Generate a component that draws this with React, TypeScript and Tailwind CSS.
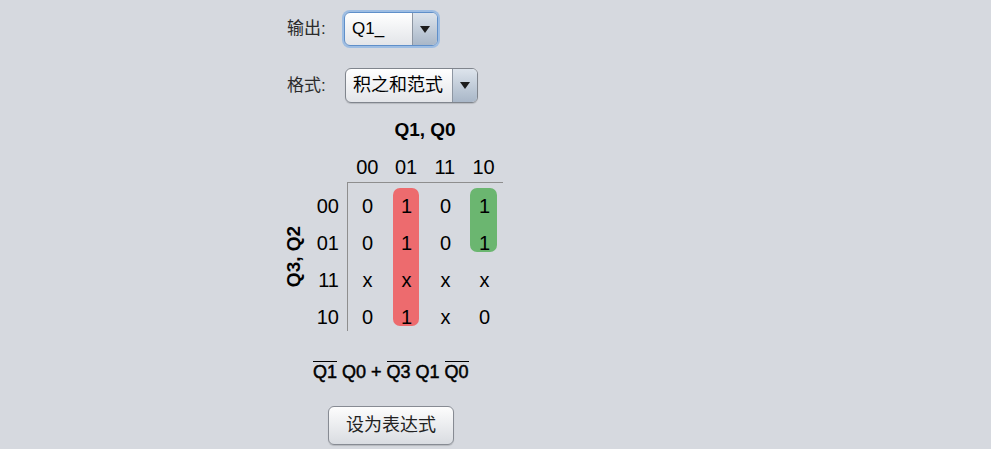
import clsx from "clsx";

const CJK = "font-['Liberation_Sans','Noto_Sans_CJK_SC',sans-serif]";

function Arrow() {
  return (
    <svg width="10" height="7" viewBox="0 0 10 7" className="block">
      <polygon points="0,0 10,0 5,7" fill="#1c1c1c" />
    </svg>
  );
}

function Combo({ value, className, focused, cjk }: { value: string; className: string; focused?: boolean; cjk?: boolean }) {
  return (
    <div
      className={clsx(
        "flex rounded-[6px] border overflow-hidden bg-linear-to-b from-[#ffffff] to-[#e3e5e9]",
        focused ? "border-[#5f8fc9] ring-2 ring-[#9dbde3]" : "border-[#80858d] shadow-[0_1px_1px_rgba(0,0,0,0.15)]",
        className
      )}
    >
      <div className={clsx("flex-1 flex items-center pl-[7px] text-black", cjk ? "text-[18px] text-[#222]" : "text-[17px]")}>{value}</div>
      <div className="w-[25px] flex items-center justify-center border-l border-[#8d96a2] bg-linear-to-b from-[#dde4ec] to-[#a9b7c8]">
        <Arrow />
      </div>
    </div>
  );
}

function Bar({ children }: { children: string }) {
  return <span className="inline-block border-t border-black leading-[21px]">{children}</span>;
}

const cols = ["00", "01", "11", "10"];
const cells = [
  ["0", "1", "0", "1"],
  ["0", "1", "0", "1"],
  ["x", "x", "x", "x"],
  ["0", "1", "x", "0"],
];

export default function App() {
  return (
    <div className={clsx("w-full h-[449px] bg-[#d6d9df] overflow-hidden", CJK)}>
      <div className="pl-[280px] pt-[12px] flex flex-col">
        {/* output select */}
        <div className="flex items-center pl-[7px]">
          <span className="w-[57px] text-[17px] text-[#2b2b2b]">输出:</span>
          <Combo value="Q1_" className="w-[94px] h-[34px]" focused />
        </div>
        <div className="flex items-center pl-[7px] mt-[22px]">
          <span className="w-[58px] text-[17px] text-[#2b2b2b]">格式:</span>
          <Combo value="积之和范式" className="w-[133px] h-[35px]" cjk />
        </div>

        {/* karnaugh map */}
        <div className="grid grid-cols-[27px_40px_156px] mt-[15px] text-black">
          <div />
          <div />
          <div className="h-[24px] leading-[24px] text-center text-[19px] font-bold">Q1, Q0</div>

          <div />
          <div />
          <div className="mt-[10px] h-[30px] pl-[1px] grid grid-cols-4 text-[20px]">
            {cols.map((c) => (
              <div key={c} className="flex items-center justify-center leading-none">{c}</div>
            ))}
          </div>

          <div className="h-[149px] flex items-center justify-center">
            <span className="-rotate-90 whitespace-nowrap text-[19px] font-bold leading-none">Q3, Q2</span>
          </div>
          <div className="pt-[5px] flex flex-col">
            {cols.map((r) => (
              <div key={r} className="h-[37px] flex items-center justify-end pr-[8px] text-[20px] leading-none">{r}</div>
            ))}
          </div>
          <div className="relative h-[149px] border-l border-t border-[#8e8e8e]">
            <div className="absolute left-[45px] top-[5px] w-[26px] h-[138px] rounded-[7px] bg-[#ed6b6e]" />
            <div className="absolute left-[122px] top-[5px] w-[27px] h-[64px] rounded-[7px] bg-[#6bb670]" />
            <div className="relative pt-[4px] flex flex-col">
              {cells.map((row, i) => (
                <div key={i} className="h-[37px] grid grid-cols-[39px_39px_39px_39px] text-[20px]">
                  {row.map((v, j) => (
                    <div key={j} className="flex items-center justify-center leading-none">{v}</div>
                  ))}
                </div>
              ))}
            </div>
          </div>
        </div>

        {/* expression */}
        <div className="mt-[25px] ml-[33px] h-[24px] leading-[24px] text-[18px] text-black whitespace-pre [-webkit-text-stroke:0.5px_black]">
          <Bar>Q1</Bar> Q0 + <Bar>Q3</Bar> Q1 <Bar>Q0</Bar>
        </div>

        <button className="mt-[22px] ml-[48px] w-[126px] h-[39px] rounded-[6px] border border-[#878b93] bg-linear-to-b from-[#fdfdfd] to-[#d9dce1] shadow-[0_1px_1px_rgba(0,0,0,0.15)] text-[18px] text-[#222]">
          设为表达式
        </button>
      </div>
    </div>
  );
}
